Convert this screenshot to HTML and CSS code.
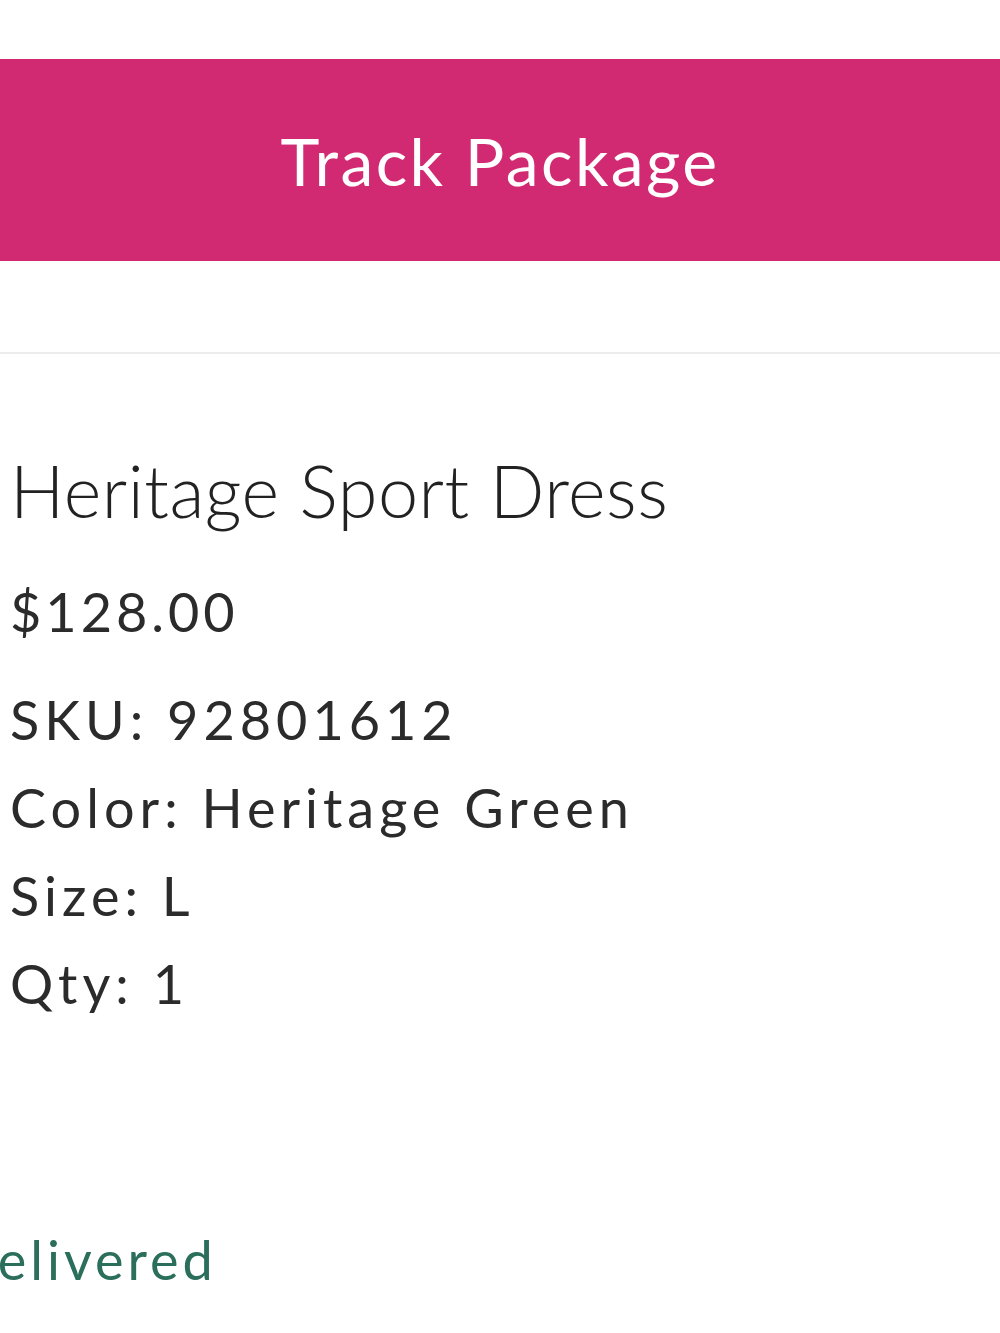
FILE: index.html
```html
<!DOCTYPE html>
<html lang="en">
<head>
  <meta charset="UTF-8">
  <title>Order Details</title>
  <link rel="stylesheet" href="styles.css">
</head>
<body>

  <div class="actions">
    <button class="track-btn">Track Package</button>
  </div>

  <div class="item">
    <h2 class="item-name">Heritage Sport Dress</h2>
    <div class="item-price">$128.00</div>
    <ul class="item-meta">
      <li>SKU: 92801612</li>
      <li>Color: Heritage Green</li>
      <li>Size: L</li>
      <li>Qty: 1</li>
    </ul>
  </div>

  <div class="status">Delivered</div>

</body>
</html>
```

FILE: styles.css
```css
html, body {
  margin: 0;
  padding: 0;
  background: #fff;
  overflow: hidden;
}
body {
  font-family: Lato, "Open Sans", sans-serif;
  color: #2b2b2b;
  width: 1000px;
  height: 1333px;
}
.actions {
  padding-top: 59px;
  padding-bottom: 91px;
  border-bottom: 2px solid #ececec;
}
.track-btn {
  display: block;
  width: 100%;
  height: 202px;
  border: none;
  margin: 0;
  padding: 0;
  background: #d22a72;
  color: #fff;
  font-family: Lato, sans-serif;
  font-size: 66px;
  font-weight: 400;
  letter-spacing: 2.4px;
  cursor: pointer;
}
.item {
  padding: 96px 0 0 10px;
}
.item-name {
  margin: 0;
  font-size: 72px;
  font-weight: 300;
  line-height: 80px;
  letter-spacing: 0.5px;
  color: #222;
}
.item-price {
  margin-top: 52px;
  font-size: 54px;
  line-height: 60px;
  letter-spacing: 4px;
}
.item-meta {
  list-style: none;
  margin: 34px 0 0;
  padding: 0;
}
.item-meta li {
  font-size: 54px;
  line-height: 88px;
  letter-spacing: 5px;
}
.status {
  margin-top: 202px;
  margin-left: -47px;
  font-size: 54px;
  line-height: 60px;
  letter-spacing: 4px;
  color: #2b6e5b;
}
```
